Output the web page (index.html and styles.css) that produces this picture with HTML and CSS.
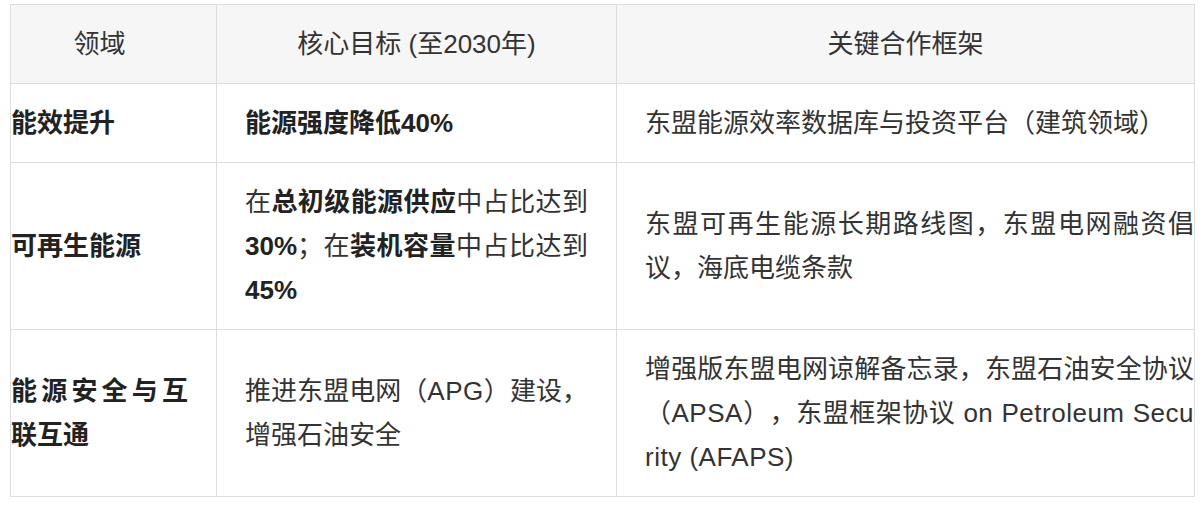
FILE: index.html
```html
<!DOCTYPE html>
<html lang="zh-CN">
<head>
<meta charset="utf-8">
<title>东盟能源合作</title>
<link rel="stylesheet" href="styles.css">
</head>
<body>
<div class="wrap">
  <table class="goals">
    <colgroup>
      <col class="c-area">
      <col class="c-goal">
      <col class="c-frame">
    </colgroup>
    <thead>
      <tr>
        <th>领域</th>
        <th>核心目标 (至2030年)</th>
        <th>关键合作框架</th>
      </tr>
    </thead>
    <tbody>
      <tr>
        <td><strong>能效提升</strong></td>
        <td><strong>能源强度降低40%</strong></td>
        <td>东盟能源效率数据库与投资平台（建筑领域）</td>
      </tr>
      <tr>
        <td><strong>可再生能源</strong></td>
        <td>在<strong>总初级能源供应</strong>中占比达到<strong>30%</strong>；在<strong>装机容量</strong>中占比达到<strong>45%</strong></td>
        <td>东盟可再生能源长期路线图，东盟电网融资倡议，海底电缆条款</td>
      </tr>
      <tr>
        <td><strong>能源安全与互联互通</strong></td>
        <td>推进东盟电网（<span class="en">APG</span>）建设，增强石油安全</td>
        <td>增强版东盟电网谅解备忘录，东盟石油安全协议（<span class="en">APSA</span>），东盟框架协议<span class="en"> on Petroleum Security (AFAPS)</span></td>
      </tr>
    </tbody>
  </table>
</div>
</body>
</html>
```

FILE: styles.css
```css
html, body {
  margin: 0;
  padding: 0;
  background: #ffffff;
}

.wrap {
  padding: 4px 0 0 10px;
}

.goals {
  width: 1184px;
  table-layout: fixed;
  border-collapse: collapse;
  font-family: "Liberation Sans", "Noto Sans CJK SC", sans-serif;
  font-size: 26px;
  line-height: 44px;
  color: #333333;
  text-spacing-trim: space-all;
}

.c-area { width: 206px; }
.c-goal { width: 400px; }
.c-frame { width: 578px; }

.goals th,
.goals td {
  border: 1px solid #dddddd;
  padding: 17px 28px;
  vertical-align: middle;
}

.goals th {
  background: #f6f6f6;
  font-weight: normal;
  text-align: center;
}

.goals td {
  text-align: justify;
  word-break: break-all;
}

.goals th:first-child,
.goals td:first-child {
  padding-left: 0;
}

.goals td:last-child {
  padding-right: 0;
}

.goals strong {
  font-weight: bold;
  color: #222222;
}

.en {
  letter-spacing: 0.5px;
}
```
